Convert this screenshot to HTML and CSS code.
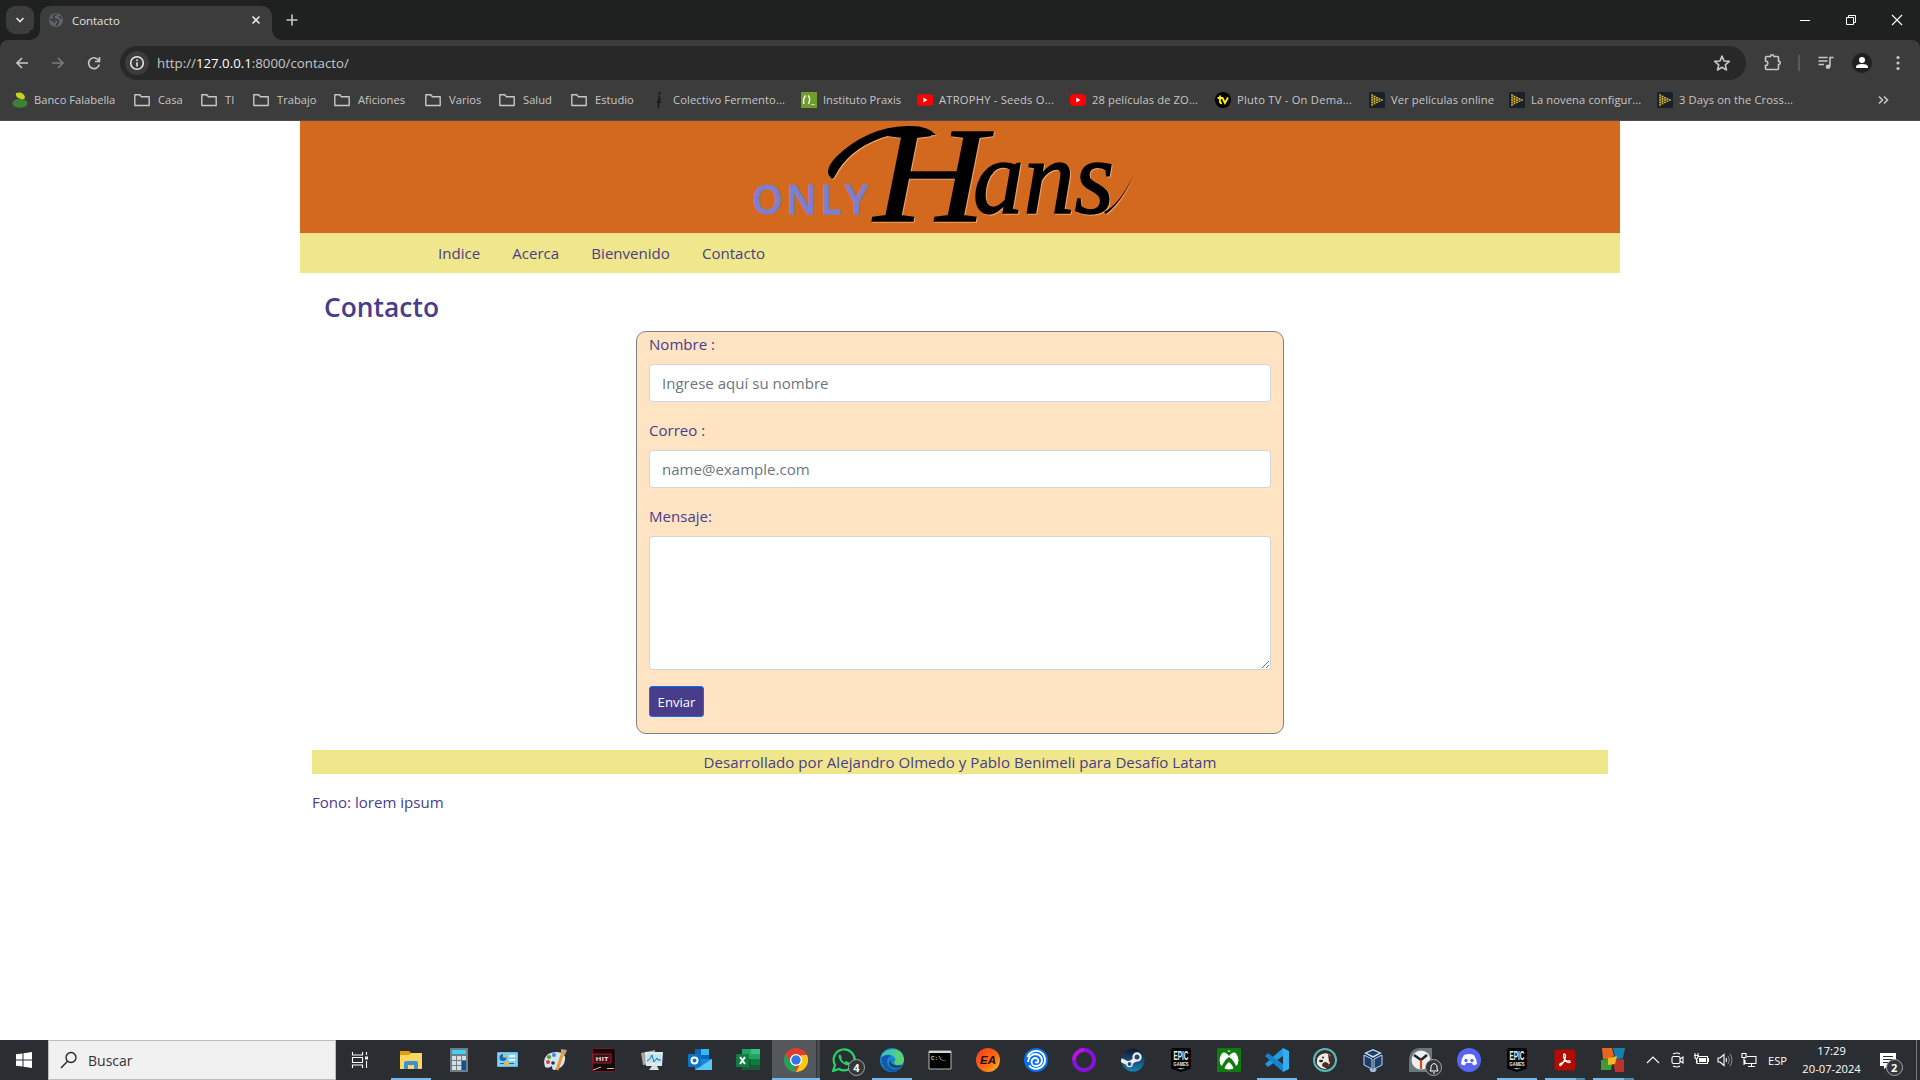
FILE: index.html
```html
<!DOCTYPE html>
<html lang="es">
<head>
<meta charset="utf-8">
<title>Contacto</title>
<link rel="stylesheet" href="styles.css">
</head>
<body>
<svg class="defs" aria-hidden="true">
  <symbol id="folder" viewBox="0 0 16 16"><path d="M.8 2.700h5l1.600 2h7.800v8.800H.8z" fill="none" stroke="#c7c7c7" stroke-width="1.400" stroke-linejoin="round"/></symbol>
  <symbol id="youtube" viewBox="0 0 16 16"><rect y="2.3" width="16" height="11.4" rx="3" fill="#f00"/><path d="M6.3 5.6v4.8L10.5 8z" fill="#fff"/></symbol>
  <symbol id="film" viewBox="0 0 16 16"><rect width="16" height="16" rx="1.5" fill="#17212c"/><path d="M2.500 2 14.500 8l-12 6z" fill="#4f4628"/><path d="M3 2.200v11.600M5.500 3.700v8.600M8 5v6M10.500 6.200v3.600M13 7.300v1.400" stroke="#f0c63a" stroke-width="1.500" stroke-dasharray="1.500 1"/></symbol>
</svg>

<div class="tabstrip">
  <div class="tabsearch"><svg width="10" height="8"><path d="m1.500 2 3.500 3.500L8.500 2" class="line bright"/></svg></div>
  <div class="tab">
    <svg width="14" height="14" viewBox="0 0 14 14"><circle cx="7" cy="7" r="7" fill="#5f6368"/><path d="M8 1.500Q4 2 4.500 4.500T8 6.800q2 1 1 3.200L7 12.500M1 6l3 1.500 2 2M10 3l2.500 2.500" fill="none" stroke="#34363a" stroke-width="1.600"/></svg>
    <span class="tab-title">Contacto</span>
    <svg width="10" height="10"><path d="m1.500 1.500 7 7m0-7-7 7" class="line bright"/></svg>
  </div>
  <svg class="newtab" width="12" height="12"><path d="M6 .5v11M.5 6h11" class="line"/></svg>
  <svg class="winbtn" width="12" height="12"><path d="M1 6.500h10" stroke="#fff"/></svg>
  <svg class="winbtn" width="12" height="12"><path d="M1.500 3.500h7v7h-7zM3.500 3.500v-2h7v7h-2" fill="none" stroke="#fff"/></svg>
  <svg class="winbtn" width="12" height="12"><path d="m1 1 10 10M11 1 1 11" stroke="#fff" stroke-width="1.100"/></svg>
</div>

<div class="toolbar">
  <div class="navbtns">
    <svg width="14" height="14"><path d="M13 7H2m5-5L2 7l5 5" class="line"/></svg>
    <svg class="dim" width="14" height="14"><path d="M1 7h11M7 2l5 5-5 5" class="line"/></svg>
    <svg width="14" height="14"><path d="M12 5A5.400 5.400 0 1 0 12.300 8.500M12.500 1v4.500H8" class="line"/></svg>
  </div>
  <div class="omnibox">
    <span class="siteinfo"><svg width="16" height="16"><circle cx="8" cy="8" r="6.300" class="line bright"/><path d="M8 7.300V11.500M8 4.400V6" class="line bright"/></svg></span>
    <span class="url">http://<b>127.0.0.1</b>:8000/contacto/</span>
    <svg width="18" height="18" viewBox="0 0 18 18"><path d="m9 2 2 5 5.300.400-4 3.500 1.200 5.100L9 13.300 4.500 16l1.200-5.100-4-3.500L7 7z" class="line" stroke-linejoin="round"/></svg>
  </div>
  <div class="actions">
    <svg width="20" height="20"><path d="M2.500 4.500q0-1 1-1h4a1.700 1.700 0 0 1 3.400 0h3.600q1 0 1 1v3.600a1.700 1.700 0 0 1 0 3.400v4q0 1-1 1h-11q-1 0-1-1V12.600a2.300 2.300 0 0 0 0-4.600z" class="line"/></svg>
    <i class="divider"></i>
    <svg width="18" height="16"><path d="M1.500 2.500h9M1.500 6h9M1.500 9.500h5.500M13 11.800V2.500h3.500" class="line"/><circle cx="11" cy="11.800" r="2.300" fill="#c7c7c7"/></svg>
    <svg class="avatar" width="20" height="20"><circle cx="10" cy="10" r="10" fill="#1f2020"/><circle cx="10" cy="7" r="3" fill="#fff"/><path d="M4 15v-1q0-3 6-3t6 3v1z" fill="#fff"/></svg>
    <svg width="4" height="16"><g fill="#c7c7c7"><circle cx="2" cy="2.500" r="1.600"/><circle cx="2" cy="8" r="1.600"/><circle cx="2" cy="13.500" r="1.600"/></g></svg>
  </div>
</div>

<div class="bookmarks">
  <span class="bm"><svg viewBox="0 0 16 16"><ellipse cx="8" cy="11.300" rx="7.500" ry="4.500" fill="#3c8134"/><path d="M4 1q7-2 9 4 0 3-4 2Q3 6 4 1" fill="#c6d420"/></svg>Banco Falabella</span>
  <span class="bm dir"><svg><use href="#folder"/></svg>Casa</span>
  <span class="bm dir"><svg><use href="#folder"/></svg>TI</span>
  <span class="bm dir"><svg><use href="#folder"/></svg>Trabajo</span>
  <span class="bm dir"><svg><use href="#folder"/></svg>Aficiones</span>
  <span class="bm dir"><svg><use href="#folder"/></svg>Varios</span>
  <span class="bm dir"><svg><use href="#folder"/></svg>Salud</span>
  <span class="bm dir"><svg><use href="#folder"/></svg>Estudio</span>
  <span class="bm mid"><svg viewBox="0 0 16 16"><path d="M8.500 0v3M7 4.500h2M10 7q-3-1-2.500 3v6M6 10h4" fill="none" stroke="#161616" stroke-width="1.500"/></svg>Colectivo Fermento...</span>
  <span class="bm"><svg viewBox="0 0 16 16"><path d="M0 0h16v16H0z" fill="#6d9e2c"/><path d="M4.500 3.500q-3 4-1.500 8.500M7 3.500q3 3 .5 8.500" fill="none" stroke="#fff" stroke-width="1.400"/><path d="M10 12.500h4" stroke="#c4d7aa"/></svg>Instituto Praxis</span>
  <span class="bm wide"><svg><use href="#youtube"/></svg>ATROPHY - Seeds O...</span>
  <span class="bm mid"><svg><use href="#youtube"/></svg>28 películas de ZO...</span>
  <span class="bm wide"><svg viewBox="0 0 16 16"><circle cx="8" cy="8" r="8" fill="#000"/><path d="M5 3.500V10q0 1.500 2 1.200M2.500 6H7.500L10 11l3-5.500" fill="none" stroke="#fff200" stroke-width="1.800"/></svg>Pluto TV - On Dema...</span>
  <span class="bm mid"><svg><use href="#film"/></svg>Ver películas online</span>
  <span class="bm mid"><svg><use href="#film"/></svg>La novena configur...</span>
  <span class="bm mid"><svg><use href="#film"/></svg>3 Days on the Cross...</span>
  <svg class="more" viewBox="0 0 12 10"><path d="m2 1.500 3.500 3.500L2 8.500m5-7L10.500 5 7 8.500" class="line"/></svg>
</div>

<main class="page">
  <div class="container">
    <header class="banner">
      <svg class="logo" width="410" height="112" viewBox="0 0 410 112">
        <text class="only" x="12" y="93" textLength="116">ONLY</text>
        <g class="ink">
          <text class="script big" x="134" y="100" textLength="112" lengthAdjust="spacingAndGlyphs">H</text>
          <text class="script" x="233" y="92" textLength="141" lengthAdjust="spacingAndGlyphs">ans</text>
          <path d="M91 57Q83 50 96 36 127 6 167 5 188 4 196 14L180 15Q165 9 141 17 108 29 95 55 93 59 91 57"/>
          <path d="M364 91Q379 84 393 55 381 82 366 93z"/>
        </g>
      </svg>
    </header>
    <nav class="menu"><a>Indice</a><a>Acerca</a><a>Bienvenido</a><a>Contacto</a></nav>
    <section class="content">
      <h1>Contacto</h1>
      <form class="form">
        <label>Nombre :</label>
        <input type="text" placeholder="Ingrese aquí su nombre">
        <label>Correo :</label>
        <input type="email" placeholder="name@example.com">
        <label>Mensaje:</label>
        <textarea></textarea>
        <button type="button">Enviar</button>
      </form>
      <footer><p class="credits">Desarrollado por Alejandro Olmedo y Pablo Benimeli para Desafío Latam</p><p class="phone">Fono: lorem ipsum</p></footer>
    </section>
  </div>
</main>

<div class="taskbar">
  <div class="start"><svg width="16" height="16"><path d="M0 2.300 6.500 1.400V7.500H0zM7.500 1.200 16 0v7.500H7.500zM0 8.500h6.500v6.100L0 13.700zM7.500 8.500H16V16l-8.500-1.200z" fill="#fff"/></svg></div>
  <div class="search"><svg width="18" height="18"><circle cx="11" cy="6.500" r="5" fill="none" stroke="#222" stroke-width="1.300"/><path d="M7.500 10.200 1 17" stroke="#222" stroke-width="1.300"/></svg>Buscar</div>
  <div class="apps">
    <span class="app taskview"><svg viewBox="0 0 24 24"><path d="M4.500 4v3h10V4M4.500 20v-3h10v3M4.500 9.500h10v5h-10zM18.500 4v3M18.500 13v7" fill="none" stroke="#fff" stroke-width="1.100"/><path d="M17 8.500h3v3h-3z" fill="#fff"/></svg></span>
    <span class="app open"><svg viewBox="0 0 24 24"><path d="M1 3h9l2 2h10v16H1z" fill="#e59c08"/><path d="M1 7h9l2-2h11v15q0 1-1 1H1z" fill="#ffd75e"/><path d="M5 21v-6q0-2 2-2h10q2 0 2 2v6h-4v-4H9v4z" fill="#3a92d8"/></svg></span>
    <span class="app"><svg viewBox="0 0 24 24"><path d="M3 0h18v24H3z" fill="#6f7d87"/><path d="M5 2h14v4H5z" fill="#3fd0f5"/><path d="M5 8h4v4H5zm5 0h4v4h-4zm5 0h4v4h-4zM5 13h4v4H5zm5 0h4v4h-4zM5 18h4v4H5zm5 0h4v4h-4z" fill="#d8dde0"/><path d="M15 13h4v9h-4z" fill="#14509a"/></svg></span>
    <span class="app"><svg viewBox="0 0 24 24"><rect x="2" y="4" width="21" height="15" rx="1" fill="#5fb9ee"/><path d="M3 5h19v13H3z" fill="#82d0f7"/><circle cx="8" cy="9.500" r="3.500" fill="#1768b4"/><path d="M8 9.500V6a3.500 3.500 0 0 1 3.500 3.500z" fill="#f4c33c"/><path d="M14 7h6v2h-6zm0 4h6v2h-6z" fill="#e9f7fe"/><path d="M5 15.500h14" stroke="#1768b4"/><path d="M9 14h5v3H9z" fill="#f0b72f"/></svg></span>
    <span class="app"><svg viewBox="0 0 24 24"><path d="M1 14Q2 4 13 4q10 0 9 8t-11 10Q9 22 9 18q-4 3-7 1z" fill="#d4e5f1"/><circle cx="6" cy="9" r="2" fill="#49a32d"/><circle cx="11" cy="7" r="2" fill="#3d8ed8"/><circle cx="5" cy="14" r="2" fill="#dc432e"/><circle cx="10" cy="15" r="1.800" fill="#27323c"/><path d="M20 4 14 22" stroke="#e89b32" stroke-width="3"/><path d="m18 1 6 1-2 5-4-1z" fill="#c69e72"/></svg></span>
    <span class="app"><svg viewBox="0 0 24 24"><rect x=".5" y=".5" width="23" height="23" rx="2" fill="#120a0d" stroke="#79191d"/><path d="M1 6h18v9H1z" fill="#3d1019" stroke="#a51c28"/><text x="10" y="12.500" text-anchor="middle" font-size="5.500" font-weight="700" textLength="13" lengthAdjust="spacingAndGlyphs" fill="#f2dede">HIT</text><path d="m1 22 8-3M15 20.500h7" stroke="#cfb9b9" fill="none"/></svg></span>
    <span class="app"><svg viewBox="0 0 24 24"><path d="m1 5 14-3 1 13-13 2z" fill="#a4aaa6"/><path d="M5 4h18l-1 14H6z" fill="#e3e8e8"/><path d="M7 6h14v9H7z" fill="#c3e4f4"/><path d="m7 13 3-2 2-4 2 7 3-4 1 2h3" fill="none" stroke="#1475a7"/><path d="M12 18h5l2 4H9z" fill="#dce1df"/></svg></span>
    <span class="app"><svg viewBox="0 0 24 24"><path d="M7 1h14v13H7z" fill="#0b64bd"/><path d="M13 1h8v6h-8z" fill="#35b8f1"/><path d="M7 11h17v11H7z" fill="#1688d8"/><path d="m24 11-17 11h16q1 0 1-1z" fill="#58c8f5"/><rect y="6" width="13" height="13" rx="1" fill="#0873c9"/><circle cx="6.500" cy="12.500" r="3" fill="none" stroke="#fff" stroke-width="2"/></svg></span>
    <span class="app"><svg viewBox="0 0 24 24"><path d="M6 1h18v21H6z" fill="#21a366"/><path d="M15 1h9v5h-9z" fill="#35c481"/><path d="M6 11h18v11H6z" fill="#185c37"/><path d="M15 11h9v6h-9z" fill="#107c41"/><rect y="6" width="13" height="13" rx="1" fill="#107c41"/><path d="m4 9 5 7m0-7-5 7" stroke="#fff" stroke-width="2"/></svg></span>
    <span class="app active open"><svg viewBox="0 0 24 24"><circle cx="12" cy="12" r="12" fill="#e33b2e"/><path d="M1.600 6 7 15l5 2 0 7A12 12 0 0 1 1.600 6" fill="#25a05a"/><path d="M12 24l5-10V7h6A12 12 0 0 1 12 24" fill="#fbc916"/><circle cx="12" cy="12" r="6" fill="#fff"/><circle cx="12" cy="12" r="4.700" fill="#2f78e6"/></svg></span>
    <span class="app"><svg viewBox="0 0 24 24"><path d="m1 23 2-6A10.500 10.500 0 1 1 7 21z" fill="none" stroke="#25d366" stroke-width="2.200"/><path d="M8 6 6.500 8q0 5 7 9 3 1 4.500-2l-4-2-1.500 1.500L9 11l1-1z" fill="#25d366"/></svg><b class="count">4</b></span>
    <span class="app open"><svg viewBox="0 0 24 24"><circle cx="12" cy="12" r="12" fill="#1687d4"/><path d="M1 9A12 12 0 0 1 24 11q0 6-6 6-3 0-4-2 3-3 0-6-5-5-13 0" fill="#45c8a5"/><path d="M13 1q10 0 11 10 0 6-6 6-3 0-4-2 4-7-1-14" fill="#65d65b" opacity=".65"/><path d="M12 8q-5 0-5 6 1 6 7 7 5 0 8-3-4 6-10 6Q2 22 1 10q5-5 11-2" fill="#1059ab"/><path d="M13 10q-4 3-1 6 3 3 9 1l1 1q-5 3-10 1-6-4 1-9" fill="#263b48"/></svg></span>
    <span class="app"><svg viewBox="0 0 24 24"><path d="M1 3h22v18H1z" fill="#030303" stroke="#b8b8b8"/><path d="M1 3h22v2H1z" fill="#d6d6d6"/><text x="3" y="12" font-size="6" font-family="Liberation Mono, monospace" fill="#fff">C:\_</text></svg></span>
    <span class="app"><svg viewBox="0 0 24 24"><defs><linearGradient id="ea" x2="1" y2="1"><stop stop-color="#f43b20"/><stop offset=".6" stop-color="#ff6d13"/><stop offset="1" stop-color="#ffc21b"/></linearGradient></defs><circle cx="12" cy="12" r="12" fill="url(#ea)"/><text x="12" y="16" text-anchor="middle" font-size="11" font-weight="700" font-style="italic" textLength="16" lengthAdjust="spacingAndGlyphs" font-family="Liberation Sans, sans-serif" fill="#1b0d0a">EA</text></svg></span>
    <span class="app"><svg viewBox="0 0 24 24"><circle cx="12" cy="12" r="12" fill="#086ff0"/><g fill="none" stroke="#fff" stroke-width="1.800"><path d="M3.500 9A9 9 0 1 1 5 17.500"/><path d="M4 14Q5 6 12 6q6 1 6 7-1 5-6 5-4 0-4.500-4 .5-4 4.500-4 3 1 2 4-1 1-3 0"/></g></svg></span>
    <span class="app"><svg viewBox="0 0 24 24"><circle cx="12" cy="12" r="10" fill="none" stroke="#8911de" stroke-width="3.800"/><path d="M2 12A10 10 0 0 1 12 2" fill="none" stroke="#b913df" stroke-width="3.800"/></svg></span>
    <span class="app"><svg viewBox="0 0 24 24"><defs><linearGradient id="st" x2="0" y2="1"><stop stop-color="#13152f"/><stop offset="1" stop-color="#1684b9"/></linearGradient></defs><circle cx="12" cy="12" r="11.500" fill="url(#st)"/><path d="m0 12 8 4 7-5" fill="none" stroke="#eee" stroke-width="4"/><circle cx="16" cy="9" r="4.700" fill="#eee"/><circle cx="16" cy="9" r="2.500" fill="#23466b"/><circle cx="8.500" cy="16" r="2.600" fill="#294b6d" stroke="#eee" stroke-width="1.400"/></svg></span>
    <span class="app"><svg viewBox="0 0 24 24"><path d="M2 2q0-2 2-2h16q2 0 2 2v17.500q0 1-1 1.500l-9 3-9-3q-1-.5-1-1.500z" fill="#050505"/><text class="epic" x="12" y="12.300" textLength="15" lengthAdjust="spacingAndGlyphs">EPIC</text><text class="epic sub" x="12" y="17.500" textLength="15" lengthAdjust="spacingAndGlyphs">GAMES</text><path d="m8 20 4 1.500 4-1.500z" fill="#aaa"/></svg></span>
    <span class="app"><svg viewBox="0 0 24 24"><rect width="24" height="24" rx="1" fill="#107c10"/><circle cx="12" cy="12" r="9.500" fill="#fff"/><path d="M5 4q4 0 7 4 3-4 7-4-4-3-7 0-3-3-7 0M4 20Q7 12 12 9q5 3 8 11l-3 2q-1-5-5-8-4 3-5 8z" fill="#107c10"/></svg></span>
    <span class="app open"><svg viewBox="0 0 24 24"><path d="M18 0v8L3 19 0 16z" fill="#219be0"/><path d="M0 8 3 5l15 11v8z" fill="#1683ca"/><path d="m18 0 6 3v18l-6 3z" fill="#30aef3"/></svg></span>
    <span class="app"><svg viewBox="0 0 24 24"><circle cx="12" cy="12" r="11" fill="#3a2c27" stroke="#58bab9" stroke-width="2"/><path d="M4 16Q3 8 9 6q6-2 9 2l-1 7-4 6q-6 0-9-5" fill="#eeebe7"/><path d="m15 6 4 3v6l-3-1zM9 18q0-4 4-4l3 2-2 5" fill="#4a3029"/><circle cx="10" cy="9.500" r="1" fill="#222"/><ellipse cx="8" cy="13" rx="2" ry="1.300" fill="#222"/></svg></span>
    <span class="app"><svg viewBox="0 0 24 24"><path d="m2 5 10-5 10 5-1 11-6 6-4 2-4-4-4-3z" fill="#10264a"/><path d="m3 5 9-4 9 4-9 5z" fill="#ccd9e6"/><path d="m6 5 6-2.500L18 5l-6 3z" fill="#1c3f70"/><path d="m3 7 8 4v10l-8-4zm10 4 8-4v10l-8 4z" fill="#1c3f70" stroke="#ccd9e6"/><path d="M8 21h8l-2 3h-4z" fill="#9db9d7"/></svg></span>
    <span class="app"><svg viewBox="0 0 24 24"><path d="M0 13Q0 0 12 0h11v24H0z" fill="#69777e"/><circle cx="12" cy="12" r="9.500" fill="#eee"/><path d="m5 7 7 5 6-5" fill="none" stroke="#222" stroke-width="2.500"/><path d="M12 12v9" stroke="#df4520" stroke-width="2.200"/></svg><b class="count"><svg class="bell" width="10" height="12"><path d="M1 9h8L8 7V4q-3-5-6 0v3zM4 11h2" fill="none" stroke="#fff"/></svg></b></span>
    <span class="app"><svg viewBox="0 0 24 24"><circle cx="12" cy="12" r="12" fill="#5865f2"/><path d="M7 7q5-2 10 0 3 5 3 9-3 2-4 1l-1-2H9l-1 2q-1 1-4-1 0-5 3-9" fill="#fff"/><circle cx="9" cy="12.500" r="1.700" fill="#5865f2"/><circle cx="15" cy="12.500" r="1.700" fill="#5865f2"/></svg></span>
    <span class="app open"><svg viewBox="0 0 24 24"><path d="M2 2q0-2 2-2h16q2 0 2 2v17.500q0 1-1 1.500l-9 3-9-3q-1-.5-1-1.500z" fill="#050505"/><text class="epic" x="12" y="12.300" textLength="15" lengthAdjust="spacingAndGlyphs">EPIC</text><text class="epic sub" x="12" y="17.500" textLength="15" lengthAdjust="spacingAndGlyphs">GAMES</text><path d="m8 20 4 1.500 4-1.500z" fill="#aaa"/></svg></span>
    <span class="app open stack"><svg viewBox="0 0 24 24"><rect x="1.500" y="1.500" width="21" height="21" rx="3" fill="#b30b00"/><path d="M11 6q2.500 0 1 4.500-2 5.500-4.500 7-2 0 0-2 4.500-3 9-2.500 2 1.700-1 1.700-4-1.700-5-6.700z" fill="none" stroke="#fff" stroke-width="1.300"/></svg></span>
    <span class="app open stack"><svg viewBox="0 0 24 24"><path d="M1 0h10l2 8-7 3H2z" fill="#e56524"/><path d="M12 0h12l-2 10-7 2z" fill="#1680b5"/><path d="m0 12 12-2-2 12H0z" fill="#3c9c38"/><path d="m12 12 11-1v13h-9z" fill="#bb332a"/><path d="m7 10 9-2-2 8-7 1z" fill="#f2b823"/></svg></span>
  </div>
  <div class="tray">
    <svg viewBox="0 0 16 16"><path d="m2 11 6-6 6 6" class="white"/></svg>
    <svg viewBox="0 0 16 16"><rect x="3" y="4.500" width="8" height="7" rx="1.500" class="white"/><path d="m11 7 3-2v6l-3-2M4 2q4-2 7 0M4 14q4 2 7 0" class="white"/></svg>
    <svg viewBox="0 0 16 16"><path d="M5 4.500h9.500v7H4V8M14.500 6.500h1v3h-1M1 3.500h5M2 1v5q2 2 3-1V1M3.500 7v4" class="white"/><path d="M6 6h7v4H6z" fill="#fff"/></svg>
    <svg viewBox="0 0 16 16"><path d="M1 6h2l4-3.500v11L3 10H1zM9 6q1 2 0 4" class="white"/><path d="M11 4q3 4 0 8M13 2q4 6 0 12" fill="none" stroke="#8a8d90"/></svg>
    <svg viewBox="0 0 16 16"><path d="M6 4.500h9v7H4V8M7 14.500h7M10.500 12v2M1 1.500h4v4H1zM3 6v7" class="white"/></svg>
  </div>
  <span class="lang">ESP</span>
  <div class="clock"><span>17:29</span><span>20-07-2024</span></div>
  <div class="notice"><svg width="18" height="16"><path d="M1 0h16v13H9l-4 3v-3H1z" fill="#fff"/><path d="M4 3.500h10M4 6.500h10M4 9.500h6" stroke="#2a2e33"/></svg><b class="count">2</b></div>
</div>
</body>
</html>
```
FILE: styles.css
```css
* { box-sizing: border-box; }
body {
  margin: 0;
  height: 1080px;
  display: flex;
  flex-direction: column;
  overflow: hidden;
  background: #fff;
  font-family: "Open Sans", "Noto Sans", sans-serif;
}
svg { display: block; flex: none; }
.defs { position: absolute; width: 0; height: 0; }
.line { fill: none; stroke: #c7c7c7; stroke-width: 1.6; }
.bright { stroke: #e6e6e6; }
.white { fill: none; stroke: #fff; stroke-width: 1.1; }

/* Browser frame */
.tabstrip {
  height: 40px;
  flex: none;
  display: flex;
  align-items: center;
  padding: 0 17px 0 6px;
  background: #1f2120;
}
.tabsearch {
  width: 28px;
  height: 28px;
  border-radius: 9px;
  background: #3c3c3c;
  display: grid;
  place-items: center;
}
.tab {
  position: relative;
  align-self: flex-end;
  width: 232px;
  height: 34px;
  margin-left: 6px;
  padding: 0 11px 6px 9px;
  display: flex;
  align-items: center;
  background: #3c3c3c;
  border-radius: 10px 10px 0 0;
}
.tab::before, .tab::after {
  content: "";
  position: absolute;
  bottom: 0;
  width: 10px;
  height: 10px;
}
.tab::before { left: -10px; background: radial-gradient(circle at 0 0, #1f2120 9.5px, #3c3c3c 10px); }
.tab::after { right: -10px; background: radial-gradient(circle at 100% 0, #1f2120 9.5px, #3c3c3c 10px); }
.tab-title { flex: 1; margin-left: 9px; font-size: 11.4px; color: #e3e3e3; }
.newtab { margin: 0 auto 0 14px; }
.winbtn { margin-left: 34px; }

.toolbar {
  height: 46px;
  flex: none;
  display: flex;
  align-items: center;
  padding: 0 19px 0 15px;
  background: linear-gradient(#1f2120, #1f2120) 0 0 / 100% 8px no-repeat;
  position: relative;
  z-index: 0;
}
.toolbar::before {
  content: "";
  position: absolute;
  inset: 0;
  z-index: -1;
  background: #3c3c3c;
  border-radius: 8px 8px 0 0;
}
.navbtns { display: flex; gap: 22px; width: 105px; flex: none; }
.dim { opacity: .45; }
.omnibox {
  width: 1626px;
  flex: none;
  height: 34px;
  border-radius: 17px;
  background: #282828;
  display: flex;
  align-items: center;
  padding: 0 15px 0 5px;
}
.siteinfo { width: 24px; height: 24px; border-radius: 50%; background: #3c3c3c; display: grid; place-items: center; }
.url { flex: 1; margin-left: 8px; font-size: 13.25px; color: #c7c7c7; }
.url b { font-weight: 400; color: #fff; }
.actions { flex: 1; display: flex; align-items: center; margin-left: 17px; }
.divider { width: 2px; height: 16px; background: #5a5a5a; margin: 0 17px 0 15px; }
.avatar { margin: 0 24px 0 17px; }

.bookmarks {
  height: 35px;
  flex: none;
  display: grid;
  grid-template-columns: 122px 67px 52px 81px 91px 74px 72px 80px 150px 116px 153px 145px 154px 140px 148px 220px 12px;
  align-items: center;
  padding: 0 0 7px 12px;
  background: #3c3c3c;
  border-bottom: 1px solid #4c4c4c;
  color: #c7c7c7;
  font-size: 11.2px;
}
.bm { display: flex; align-items: center; gap: 6px; white-space: nowrap; line-height: 15px; }
.bm.dir { gap: 8px; }
.bm.mid { letter-spacing: .1px; }
.bm.wide { letter-spacing: .22px; }
.bm svg { width: 16px; height: 16px; }
.more { width: 12px; height: 10px; }

/* Site */
.page { flex: 1; min-height: 0; font-size: 15.06px; line-height: 24px; color: #483d8b; }
.container { width: 1320px; margin: 0 auto; }
.banner { height: 112px; background: #d2691e; padding-left: 440px; }
.logo { overflow: visible; }
.only { font: 600 39px "Open Sans", sans-serif; fill: #7b7fd4; stroke: #7b7fd4; stroke-width: .8px; }
.ink { fill: #000; filter: drop-shadow(1px 1px 0 rgba(255, 240, 225, .45)); }
.script {
  font: italic 105px "Liberation Serif", serif;
  stroke: #000;
  stroke-width: 1.5px;
}
.script.big { font-size: 136px; }
.menu { height: 40px; padding: 8px 0 0 138px; display: flex; gap: 32.2px; background: #f0e68c; }
.content { padding: 0 12px; }
h1 { margin: 17px 0 7px 12px; font-size: 26.4px; line-height: 34px; font-weight: 600; }
.form {
  width: 648px;
  height: 403px;
  margin: 0 auto 16px;
  padding: 0 12px;
  background: #ffe4c4;
  border: 1px solid gray;
  border-radius: 10px;
}
.form label { display: block; margin-bottom: 8px; }
.form input, .form textarea {
  display: block;
  width: 100%;
  height: 38px;
  margin: 0 0 16px;
  padding: 6px 12px;
  font: inherit;
  color: #212529;
  background: #fff;
  border: 1px solid #ced4da;
  border-radius: 4px;
}
.form textarea { height: 134px; }
.form ::placeholder { color: #6c757d; opacity: 1; }
.form button {
  display: block;
  width: 55px;
  height: 31px;
  padding: 0;
  font: 13.1px "Open Sans", sans-serif;
  color: #fff;
  background: #483d8b;
  border: 1px solid #0d6efd;
  border-radius: 3px;
}
footer p { margin: 0; }
.credits { background: #f0e68c; text-align: center; height: 24px; letter-spacing: .03px; }
footer .phone { margin-top: 16px; }

/* Taskbar */
.taskbar { height: 40px; flex: none; display: flex; align-items: center; background: #2a2e33; color: #fff; }
.taskbar > * { flex: none; }
.start { width: 48px; display: grid; place-items: center; }
.search {
  width: 288px;
  height: 40px;
  display: flex;
  align-items: center;
  gap: 10px;
  padding-left: 11px;
  background: #f1f1f1;
  border: 1px solid #bdbdbd;
  color: #333;
  font-size: 14px;
}
.apps { display: flex; }
.app { position: relative; flex: none; width: 48.1px; height: 40px; display: grid; place-items: center; }
.app.taskview { margin-right: 3px; }
.app > svg { width: 24px; height: 24px; }
.app.open::after { content: ""; position: absolute; left: 4px; right: 4px; bottom: 0; height: 2px; background: #76b9ed; }
.app.active { background: linear-gradient(90deg, #54585d 44px, #303439 44px 45px, #484c51 45px); }
.app.active::after { left: 0; right: 0; }
.app.stack::after { background: linear-gradient(90deg, #76b9ed 31px, #5286b0 31px); }
.epic { font: 700 13px "Liberation Sans", sans-serif; fill: #eee; text-anchor: middle; }
.epic.sub { font-size: 4.6px; }
.count {
  position: absolute;
  left: 28px;
  top: 19px;
  width: 17px;
  height: 17px;
  border: 1px solid #a5a7a9;
  border-radius: 50%;
  background: #33373b;
  display: grid;
  place-items: center;
  font-size: 11px;
  line-height: 14px;
}
.bell { width: 10px; height: 12px; }
.tray { display: flex; gap: 8px; margin-left: 7px; }
.tray svg { width: 16px; height: 16px; }
.lang { width: 42px; text-align: center; font-size: 11.2px; }
.clock { width: 66px; display: flex; flex-direction: column; align-items: center; font-size: 11.2px; line-height: 18px; white-space: nowrap; }
.notice { position: relative; height: 40px; width: 52px; border-right: 1px solid #777a7d; padding: 13px 0 0 14px; }
.notice .count { left: 21px; }
```
